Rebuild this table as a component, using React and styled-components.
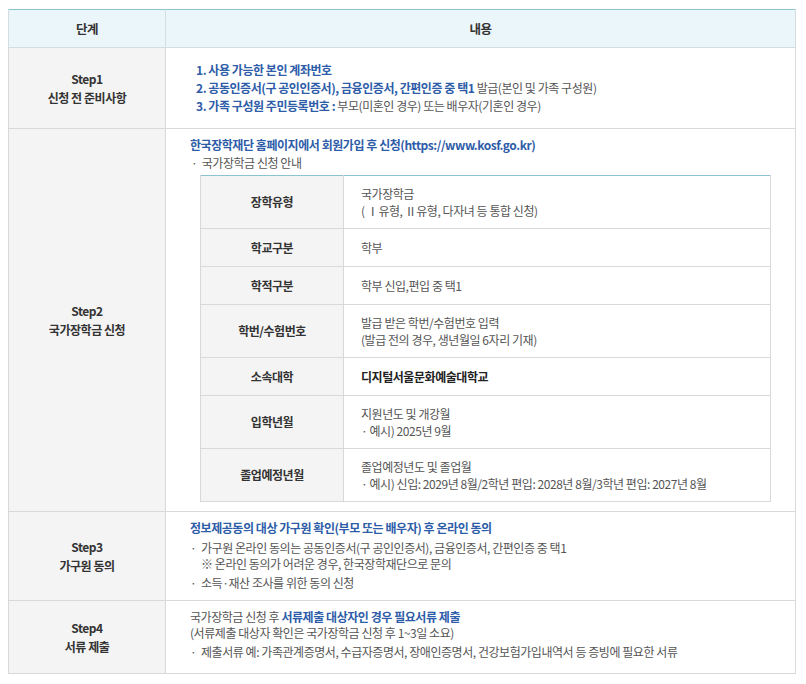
import React from 'react';
import styled, { createGlobalStyle } from 'styled-components';

const GlobalStyle = createGlobalStyle`
  body {
    margin: 0;
    background: #fff;
    font-family: "Noto Sans CJK KR", "Noto Sans", sans-serif;
    color: #555;
  }
`;

const Page = styled.div`
  padding: 9px 10px 10px 8px;
`;

const Table = styled.table`
  width: 788px;
  border-collapse: collapse;
  table-layout: fixed;
  border-top: 1px solid #8cc3d1;
  font-size: 12px;
  letter-spacing: -0.45px;
`;

const HeadCell = styled.th`
  height: 37px;
  background: #ebf6fa;
  border: 1px solid #d3dde0;
  border-top: none;
  color: #333;
  font-weight: 700;
  font-size: 12.5px;
  padding: 0;
`;

const StepCell = styled.th`
  width: 157px;
  background: #f4f4f4;
  border: 1px solid #d9d9d9;
  color: #333;
  font-weight: 700;
  line-height: 19px;
  padding: 0;
  height: ${({ $h }) => $h}px;
`;

const Content = styled.td`
  border: 1px solid #d9d9d9;
  padding: ${({ $pad }) => $pad};
  vertical-align: ${({ $top }) => ($top ? 'top' : 'middle')};
  line-height: 18px;
`;

const List = styled.ol`
  list-style: none;
  margin: 0;
  padding: 0 0 0 3px;
`;

const Blue = styled.strong`
  color: #2d5ca8;
  font-weight: 700;
`;

const Heading = styled.div`
  color: #2d5ca8;
  font-weight: 700;
  line-height: 18px;
`;

const Line = styled.div`
  line-height: 16px;
`;

const Bullets = styled.ul`
  list-style: none;
  margin: ${({ $mt }) => $mt || 0}px 0 0;
  padding: 0;
`;

const Bullet = styled.li`
  position: relative;
  padding-left: 11px;
  line-height: 16px;
  & + & {
    margin-top: 3px;
  }
  &::before {
    content: '·';
    position: absolute;
    left: 0;
    top: 0;
  }
`;

const Guide = styled.div`
  padding-left: 1px;
  line-height: 18px;
`;

const Inner = styled.table`
  margin: 3px 0 0 10px;
  width: 571px;
  border-collapse: collapse;
  table-layout: fixed;
  border-top: 1px solid #8cc3d1;
`;

const InnerLabel = styled.th`
  width: 142px;
  background: #f4f4f4;
  border: 1px solid #d9d9d9;
  border-top: none;
  color: #333;
  font-weight: 700;
  padding: 0;
  height: ${({ $tall }) => ($tall ? 52 : 37)}px;
`;

const InnerValue = styled.td`
  border: 1px solid #d9d9d9;
  border-top: none;
  padding: 0 0 0 17px;
  line-height: 17px;
  font-weight: ${({ $bold }) => ($bold ? 700 : 400)};
  color: ${({ $bold }) => ($bold ? '#222' : '#555')};
`;

const grantRows = [
  { label: '장학유형', tall: true, lines: ['국가장학금', '( Ⅰ유형, Ⅱ유형, 다자녀 등 통합 신청)'] },
  { label: '학교구분', lines: ['학부'] },
  { label: '학적구분', lines: ['학부 신입,편입 중 택1'] },
  { label: '학번/수험번호', tall: true, lines: ['발급 받은 학번/수험번호 입력', '(발급 전의 경우, 생년월일 6자리 기재)'] },
  { label: '소속대학', bold: true, lines: ['디지털서울문화예술대학교'] },
  { label: '입학년월', tall: true, lines: ['지원년도 및 개강월', '· 예시) 2025년 9월'] },
  {
    label: '졸업예정년월',
    tall: true,
    lines: ['졸업예정년도 및 졸업월', '· 예시) 신입: 2029년 8월/2학년 편입: 2028년 8월/3학년 편입: 2027년 8월'],
  },
];

function App() {
  return (
    <Page>
      <GlobalStyle />
      <Table>
        <colgroup>
          <col style={{ width: 157 }} />
          <col />
        </colgroup>
        <thead>
          <tr>
            <HeadCell>단계</HeadCell>
            <HeadCell>내용</HeadCell>
          </tr>
        </thead>
        <tbody>
          <tr>
            <StepCell $h={80}>Step1<br />신청 전 준비사항</StepCell>
            <Content $pad="0 0 0 27px">
              <List>
                <li><Blue>1. 사용 가능한 본인 계좌번호</Blue></li>
                <li><Blue>2. 공동인증서(구 공인인증서), 금융인증서, 간편인증 중 택1</Blue> 발급(본인 및 가족 구성원)</li>
                <li><Blue>3. 가족 구성원 주민등록번호 :</Blue> 부모(미혼인 경우) 또는 배우자(기혼인 경우)</li>
              </List>
            </Content>
          </tr>
          <tr>
            <StepCell>Step2<br />국가장학금 신청</StepCell>
            <Content $top $pad="7px 0 9px 24px">
              <Heading>한국장학재단 홈페이지에서 회원가입 후 신청(https://www.kosf.go.kr)</Heading>
              <Guide>·&nbsp;&nbsp;국가장학금 신청 안내</Guide>
              <Inner>
                <tbody>
                  {grantRows.map((row) => (
                    <tr key={row.label}>
                      <InnerLabel $tall={row.tall}>{row.label}</InnerLabel>
                      <InnerValue $bold={row.bold}>
                        {row.lines.map((line) => (
                          <div key={line}>{line}</div>
                        ))}
                      </InnerValue>
                    </tr>
                  ))}
                </tbody>
              </Inner>
            </Content>
          </tr>
          <tr>
            <StepCell $h={88}>Step3<br />가구원 동의</StepCell>
            <Content $top $pad="7px 0 0 24px">
              <Heading>정보제공동의 대상 가구원 확인(부모 또는 배우자) 후 온라인 동의</Heading>
              <Bullets $mt={3}>
                <Bullet>
                  가구원 온라인 동의는 공동인증서(구 공인인증서), 금융인증서, 간편인증 중 택1
                  <br />※ 온라인 동의가 어려운 경우, 한국장학재단으로 문의
                </Bullet>
                <Bullet>소득·재산 조사를 위한 동의 신청</Bullet>
              </Bullets>
            </Content>
          </tr>
          <tr>
            <StepCell $h={72}>Step4<br />서류 제출</StepCell>
            <Content $top $pad="8px 0 0 24px">
              <Line>국가장학금 신청 후 <Blue>서류제출 대상자인 경우 필요서류 제출</Blue></Line>
              <Line>(서류제출 대상자 확인은 국가장학금 신청 후 1~3일 소요)</Line>
              <Bullets $mt={3}>
                <Bullet>제출서류 예: 가족관계증명서, 수급자증명서, 장애인증명서, 건강보험가입내역서 등 증빙에 필요한 서류</Bullet>
              </Bullets>
            </Content>
          </tr>
        </tbody>
      </Table>
    </Page>
  );
}

export default App;
